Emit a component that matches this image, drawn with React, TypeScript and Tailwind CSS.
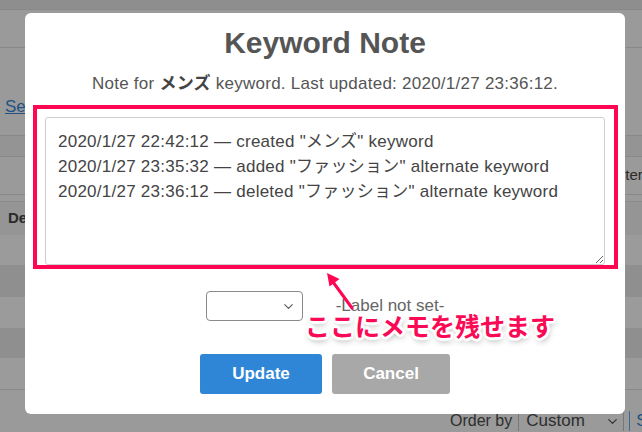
import { ChevronDown } from 'lucide-react';

const NOTE_LINES = [
  '2020/1/27 22:42:12 — created "メンズ" keyword',
  '2020/1/27 23:35:32 — added "ファッション" alternate keyword',
  '2020/1/27 23:36:12 — deleted "ファッション" alternate keyword',
];

function BackgroundPage() {
  return (
    <div className="flex flex-col text-[#333]">
      <div className="h-[10px] bg-[#8e8e8e] border-b border-[#878787]" />
      <div className="h-[38px] border-b border-[#888]" />
      <div className="h-[88px] pt-[47px] pl-[5px] border-b border-[#888]">
        <span className="text-[17px] leading-[20px] text-[#1f5283] underline">Settings</span>
      </div>
      <div className="h-[21px] bg-[#949494] border-b border-[#888]" />
      <div className="h-[38px] flex items-center border-b border-[#888]">
        <span className="ml-[612px] whitespace-nowrap text-[15px] text-[#2a2a2a]">Alternate</span>
      </div>
      <div className="h-[7px] border-b border-[#8c8c8c]" />
      <div className="h-[33px] flex items-center pl-[8px] bg-[#959595]">
        <span className="text-[15px] font-bold text-[#2a2a2a]">Description</span>
      </div>
      <div className="h-[30px] bg-[#9b9b9b]" />
      <div className="h-[32px] bg-[#8f8f8f]" />
      <div className="h-[31px] bg-[#9b9b9b]" />
      <div className="h-[30px] bg-[#8f8f8f]" />
      <div className="h-[32px] bg-[#9b9b9b] border-b border-[#888]" />
      <div className="flex items-end h-[41px]">
        <div className="ml-[450px] shrink-0 flex items-center h-[20px] leading-[20px] whitespace-nowrap text-[16px] text-[#2e2e2e]">
          <span>Order by</span>
          <div className="ml-[6px] h-[20px] border-l border-[#777]" />
          <div className="w-[104px] shrink-0 pl-[7px] pr-[3px] flex items-center justify-between">
            <span className="text-[17px]">Custom</span>
            <ChevronDown className="w-[15px] h-[15px] text-[#333]" strokeWidth={2} />
          </div>
          <div className="h-[20px] border-l border-[#777]" />
          <div className="ml-[5px] h-[20px] shrink-0 border-l border-[#3a6a96] pl-[6px] text-[17px] text-[#1f5283]">Save</div>
        </div>
      </div>
    </div>
  );
}

function KeywordNoteModal() {
  return (
    <div className="absolute left-[25px] top-[13px] w-[600px] h-[401px] bg-white rounded-[6px] flex flex-col items-center">
      <h1 className="mt-[13px] text-[30px] leading-[34px] font-bold text-[#555]">Keyword Note</h1>
      <p className="mt-[14px] text-[17px] leading-[20px] tracking-[0.25px] text-[#555] whitespace-nowrap">
        Note for <b className="font-bold text-[#444]">メンズ</b> keyword. Last updated: 2020/1/27 23:36:12.
      </p>

      <div className="relative mt-[23px]">
        <textarea
          className="block w-[560px] h-[148px] border border-[#cfcfcf] rounded-[3px] pl-[12px] pr-[12px] pt-[11px] text-[17px] leading-[25px] tracking-[0.25px] text-[#444] outline-none"
          defaultValue={NOTE_LINES.join('\n')}
        />
        {/* annotation frame */}
        <div className="pointer-events-none absolute left-[-12px] top-[-12px] right-[-13px] bottom-[-4px] border-[4px] border-[#fe0652]" />
      </div>

      <div className="mt-[26px] flex items-center gap-[33px]">
        <div className="relative w-[97px] h-[30px] border border-[#8a8a8a] rounded-[4px] bg-white">
          <ChevronDown className="absolute right-[6px] top-[7px] w-[15px] h-[15px] text-[#555]" strokeWidth={1.75} />
        </div>
        <span className="text-[17px] leading-[20px] text-[#666]">-Label not set-</span>
      </div>

      <div className="mt-[33px] flex gap-[10px]">
        <button className="w-[122px] h-[40px] rounded-[3px] bg-[#2f86d7] text-white text-[17px] font-bold">Update</button>
        <button className="w-[118px] h-[40px] rounded-[3px] bg-[#a8a8a8] text-white text-[17px] font-bold">Cancel</button>
      </div>
    </div>
  );
}

function Annotation() {
  return (
    <>
      <svg className="absolute left-[300px] top-[260px]" width="70" height="60" viewBox="0 0 70 60">
        <line x1="52" y1="48" x2="33" y2="22" stroke="#fe0652" strokeWidth="3" strokeLinecap="round" />
        <polygon points="27,13 39.5,19 29.5,26.5" fill="#fe0652" />
      </svg>
      <div
        className="absolute left-[305px] top-[309px] whitespace-nowrap text-[25px] leading-[32px] font-bold text-[#fa0a55] font-['Noto_Sans_CJK_JP',sans-serif] [text-shadow:2px_0_0_#fff,-2px_0_0_#fff,0_2px_0_#fff,0_-2px_0_#fff,2px_2px_0_#fff,-2px_-2px_0_#fff,2px_-2px_0_#fff,-2px_2px_0_#fff,3px_0_1px_#fff,-3px_0_1px_#fff,0_3px_1px_#fff,0_-3px_1px_#fff,1px_3px_6px_rgba(0,0,0,0.45)]"
      >
        ここにメモを残せます
      </div>
    </>
  );
}

export default function App() {
  return (
    <div className="relative w-[642px] h-[432px] overflow-hidden bg-[#9a9a9a] font-['Liberation_Sans','Noto_Sans_CJK_JP',sans-serif]">
      <BackgroundPage />
      <KeywordNoteModal />
      <Annotation />
    </div>
  );
}
